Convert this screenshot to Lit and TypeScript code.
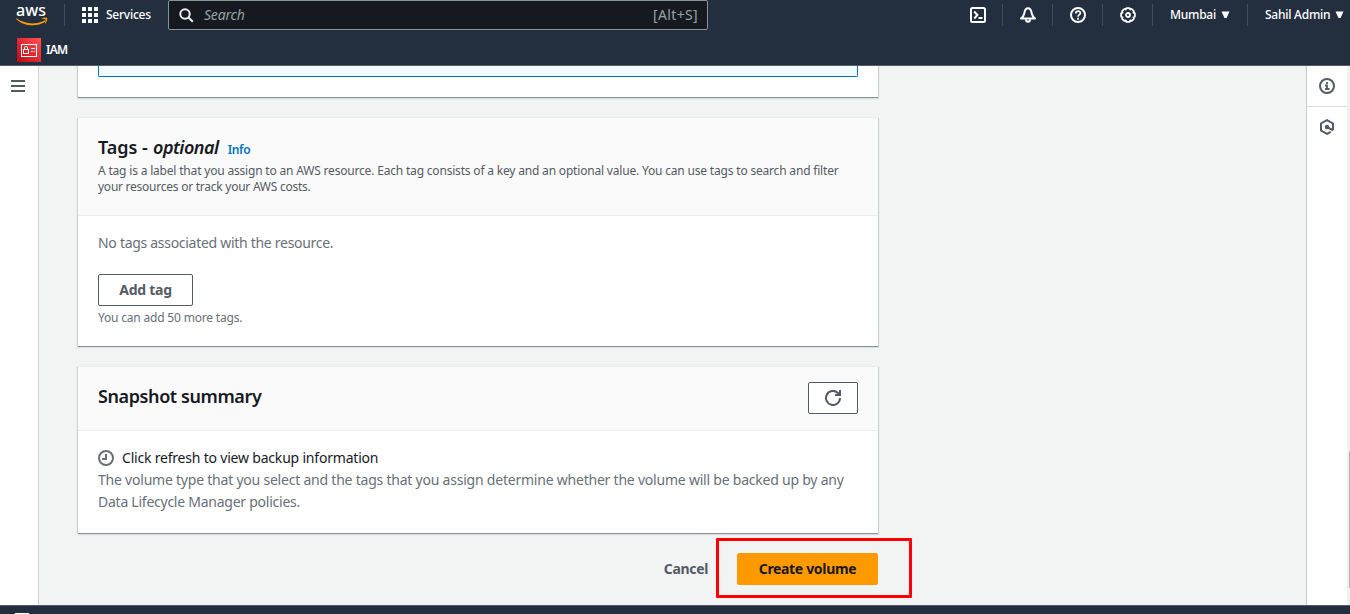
import { LitElement, html, css, svg } from "lit";
import { customElement } from "lit/decorators.js";

const caret = html`<svg class="caret" width="9" height="8" viewBox="0 0 9 8"><path d="M.5.5h8L5.500 7h-2z" fill="#fff"/></svg>`;

@customElement("console-header")
class ConsoleHeader extends LitElement {
  static styles = css`
    :host { display: flex; flex-direction: column; height: 65px; background: #232f3e; border-bottom: 1px solid #545b64; color: #fff; font-size: 12px; }
    svg { display: block; flex: none; }
    .top { display: flex; height: 30px; align-items: center; flex: none; }
    .logo { margin-left: 16px; width: 32px; overflow: visible; }
    .sep { width: 1px; height: 22px; background: #414d5c; flex: none; }
    .logo + .sep { margin-left: 16px; margin-right: 17px; }
    .services { display: flex; align-items: center; gap: 8px; width: 86px; white-space: nowrap; font-weight: 500; }
    .services span { letter-spacing: -0.25px; }
    .search { box-sizing: border-box; width: 540px; height: 30px; border: 1px solid #879596; border-radius: 2px; background: #16191f; display: flex; align-items: center; padding: 0 9px 0 10px; color: #95a5a6; font-size: 14px; }
    .search em { margin-left: 10px; flex: 1; color: #95a5a6; letter-spacing: -0.2px; }
    .alt { letter-spacing: 0.35px; }
    .tools { margin-left: auto; display: flex; align-items: center; height: 30px; }
    .tool { display: flex; justify-content: center; width: 49px; }
    .menu { display: flex; align-items: center; white-space: nowrap; font-weight: 500; }
    .region { width: 77px; padding-left: 17px; justify-content: flex-start; gap: 5px; }
    .user { width: 85px; padding-left: 17px; gap: 5px; }
    .region span { letter-spacing: -0.25px; }
    .user span { letter-spacing: -0.25px; }
    .fav { display: flex; align-items: center; height: 24px; margin: 8px 0 0 17px; gap: 5px; font-weight: 600; letter-spacing: -0.8px; }
  `;
  render() {
    return html`
      <div class="top">
        <svg class="logo" width="32" height="24" viewBox="0 0 32 24">
          <text x="0" y="12.500" font-family="Noto Sans, sans-serif" font-size="17" font-weight="500" fill="#fff" textLength="30" lengthAdjust="spacingAndGlyphs">aws</text>
          <path d="M.3 15.3c8.500 5.900 19 6.800 28.300 2.300.9-.4 1.500.5.700 1.100C20.500 24.300 7.500 23.300.1 15.900c-.3-.4-.1-.8.200-.6z" fill="#f90"/>
          <path d="M25.900 15.400c1.700-1.100 4.600-1 5.200-.4.500.7-.1 4-1.700 5.500-.4.300-.6.100-.5-.2.500-1.200 1.100-3 .8-3.700-.4-.6-2.400-.6-3.500-.6-.5-.1-.6-.4-.3-.6z" fill="#f90"/>
        </svg>
        <div class="sep"></div>
        <div class="services">
          <svg width="16" height="16" viewBox="0 0 16 16" fill="#fff">
            ${[0, 6, 12].map((y) => [0, 6, 12].map((x) => svg`<rect x=${x} y=${y} width="4" height="4" rx=".5"/>`))}
          </svg>
          <span>Services</span>
        </div>
        <div class="search">
          <svg width="15" height="15" viewBox="0 0 15 15" fill="none" stroke="#eaeded" stroke-width="2"><circle cx="6" cy="6" r="4.700"/><path d="M9.300 9.300l4.500 4.500"/></svg>
          <em>Search</em><span class="alt">[Alt+S]</span>
        </div>
        <div class="tools">
          <div class="tool"><svg width="16" height="16" viewBox="0 0 16 16" fill="none" stroke="#fff" stroke-width="2"><rect x="1" y="1" width="14" height="14" rx="1.500"/><path d="M4.200 4.500L7.400 8l-3.200 3.500M8.500 11h4"/></svg></div>
          <div class="sep"></div>
          <div class="tool"><svg width="16" height="16" viewBox="0 0 16 16" fill="none" stroke="#fff" stroke-width="2" stroke-linejoin="round"><path d="M1 11.500C3 10 3.900 8.300 4.300 6.200 4.800 3 6 1.300 8 1.300s3.200 1.700 3.700 4.900c.4 2.100 1.300 3.800 3.300 5.300z"/><path d="M6 12.300c0 3.400 4 3.400 4 0"/></svg></div>
          <div class="sep"></div>
          <div class="tool"><svg width="16" height="16" viewBox="0 0 16 16" fill="none" stroke="#fff" stroke-width="2"><circle cx="8" cy="8" r="7"/><path d="M5.700 6.500C5.700 3.300 10.500 3.500 10.400 6.300 10.300 7.900 8 7.700 8 9.700M8 10.700v2" stroke-width="1.700"/></svg></div>
          <div class="sep"></div>
          <div class="tool"><svg width="16" height="16" viewBox="0 0 16 16" fill="none" stroke="#fff" stroke-width="1.800" stroke-linejoin="round"><path d="M6.400 1.100h3.200l.6 1.400 1.600-.5 2.100 2.200-.5 1.500 1.500.7v3.200l-1.500.7.5 1.500-2.100 2.100-1.600-.5-.6 1.500H6.400l-.6-1.500-1.600.5-2.100-2.100.5-1.500-1.500-.7V6.400l1.500-.7-.5-1.500L4.200 2l1.600.5z"/><circle cx="8" cy="8" r="2"/></svg></div>
          <div class="sep"></div>
          <div class="menu region"><span>Mumbai</span>${caret}</div>
          <div class="sep"></div>
          <div class="menu user"><span>Sahil Admin</span>${caret}</div>
        </div>
      </div>
      <div class="fav">
        <svg width="24" height="24" viewBox="0 0 24 24">
          <defs><linearGradient id="g" x1="0" y1="1" x2="1" y2="0"><stop offset="0" stop-color="#bd0816"/><stop offset="1" stop-color="#ff5252"/></linearGradient></defs>
          <rect width="24" height="24" fill="url(#g)"/>
          <g fill="none" stroke="#fff"><rect x="4.500" y="6.500" width="15" height="12"/><rect x="6.500" y="11.500" width="5" height="4"/><path d="M7.500 11V9.500q0-1 1.500-1t1.500 1V11M14 10.500h4M14 13.500h2M17 13.500h1"/></g>
        </svg>
        <span>IAM</span>
      </div>`;
  }
}

@customElement("app-root")
class AppRoot extends LitElement {
  static styles = css`
    :host { display: flex; flex-direction: column; height: 614px; overflow: hidden; font-family: "Noto Sans", "Open Sans", sans-serif; font-size: 14px; line-height: 22px; color: #16191f; background: #f2f3f3; }
    svg { display: block; flex: none; }
    console-header { flex: none; }
    .main { height: 539px; flex: none; display: flex; overflow: hidden; }
    .left { box-sizing: border-box; width: 39px; background: #fff; border-right: 1px solid #d0d4d4; padding: 14px 0 0 11px; }
    .content { flex: 1; padding-left: 39px; display: flex; flex-direction: column; }
    .right { width: 40px; background: #fff; border-left: 1px solid #c3cccc; }
    .cell { height: 40px; display: flex; align-items: center; justify-content: center; }
    .cell:first-child { border-bottom: 1px solid #d5dbdb; }
    .track { width: 3px; background: #f1f1f1; display: flex; justify-content: flex-end; }
    .thumb { width: 1px; height: 137px; background: #b5b5b5; margin-top: 385px; }
    .card { width: 800px; background: #fff; box-shadow: 0 1px 0 0 #879596, 1px 0 0 0 #c9d0d0, -1px 0 0 0 #c9d0d0, 0 -1px 0 0 #eaeded, 0 1px 1px 1px rgba(0,28,36,.1); margin: 0 0 21px 0; flex: none; }
    .prev { box-sizing: border-box; height: 31px; padding: 0 20px; }
    .selected { box-sizing: border-box; height: 11px; border: 1px solid #0073bb; border-top: 0; background: #f1faff; border-radius: 0 0 2px 2px; }
    .tags { height: 228px; }
    .head { background: #fafafa; border-bottom: 1px solid #eaeded; padding: 19px 20px 20px; }
    .title { font-size: 18px; line-height: 22px; font-weight: 600; white-space: nowrap; margin: 0; }
    .t1 { display: flex; height: 22px; align-items: baseline; margin-top: -1px; margin-bottom: 5px; }
    .t1 em { letter-spacing: -0.5px; }
    .t1 .tt { width: 55px; letter-spacing: -0.05px; white-space: pre; }
    .t2 { letter-spacing: -0.4px; }
    .info { font-size: 12px; font-weight: 600; color: #0073bb; margin-left: 9px; letter-spacing: -0.3px; }
    .desc { font-size: 12px; line-height: 16px; margin-top: 4px; color: #545b64; white-space: nowrap; letter-spacing: -0.185px; }
    .d2 { letter-spacing: -0.25px; }
    .body { padding: 16px 20px 20px; white-space: nowrap; color: #687078; letter-spacing: -0.22px; }
    .b1 { letter-spacing: -0.29px; }
    .btn { box-sizing: border-box; height: 32px; border: 1px solid #545b64; border-radius: 2px; background: #fff; color: #545b64; font: 700 14px/22px "Noto Sans", sans-serif; letter-spacing: -0.25px; display: flex; align-items: center; justify-content: center; padding: 0; white-space: nowrap; }
    .add { width: 95px; margin-top: 20px; }
    .hint { font-size: 12px; line-height: 16px; margin-top: 4px; color: #687078; letter-spacing: -0.19px; }
    .summary { height: 166px; margin-bottom: 20px; }
    .row { display: flex; justify-content: space-between; padding: 15px 20px 16px; }
    .row .title { margin-top: 3px; }
    .refresh { width: 50px; }
    .status { display: flex; align-items: center; gap: 8px; color: #16191f; letter-spacing: -0.2px; }
    .s3 { letter-spacing: -0.25px; }
    .actions { width: 800px; display: flex; justify-content: flex-end; align-items: center; gap: 29px; }
    .cancel { color: #545b64; font-weight: 700; letter-spacing: -0.35px; }
    .anchor { position: relative; }
    .create { width: 141px; background: #f90; border-color: #f90; color: #16191f; letter-spacing: -0.33px; }
    .mark { position: absolute; left: -21px; top: -15px; width: 190px; height: 54px; border: 3px solid #f00; border-radius: 1px; pointer-events: none; }
    .footer { flex: none; height: 8px; border-top: 1px solid #545b64; background: #232f3e; display: flex; align-items: flex-end; }
    .peek { width: 14px; height: 1px; background: #fff; margin-left: 15px; }
  `;
  render() {
    return html`
      <console-header></console-header>
      <div class="main">
        <div class="left"><svg width="14" height="12" viewBox="0 0 14 12" fill="#545b64"><path d="M0 0h14v2H0zM0 5h14v2H0zM0 10h14v2H0z"/></svg></div>
        <div class="content">
          <div class="card prev"><div class="selected"></div></div>
          <section class="card tags">
            <div class="head">
              <h2 class="title t1"><span class="tt">Tags - </span><em>optional</em><span class="info">Info</span></h2>
              <div class="desc"><span class="d1">A tag is a label that you assign to an AWS resource. Each tag consists of a key and an optional value. You can use tags to search and filter</span><br><span class="d2">your resources or track your AWS costs.</span></div>
            </div>
            <div class="body">
              <div><span class="b1">No tags associated with the resource.</span></div>
              <button class="btn add">Add tag</button>
              <div class="hint">You can add 50 more tags.</div>
            </div>
          </section>
          <section class="card summary">
            <div class="head row">
              <h2 class="title t2">Snapshot summary</h2>
              <button class="btn refresh"><svg width="16" height="16" viewBox="0 0 16 16" fill="none" stroke="#545b64" stroke-width="2"><path d="M15 8a7 7 0 1 1-2.300-5.200L15 5"/><path d="M15 0v5h-5"/></svg></button>
            </div>
            <div class="body">
              <div class="status"><svg width="16" height="16" viewBox="0 0 16 16" fill="none" stroke="#687078" stroke-width="2"><circle cx="8" cy="8" r="7"/><path d="M8 4v5H4"/></svg><span class="s1">Click refresh to view backup information</span></div>
              <div><span class="s2">The volume type that you select and the tags that you assign determine whether the volume will be backed up by any</span><br><span class="s3">Data Lifecycle Manager policies.</span></div>
            </div>
          </section>
          <div class="actions">
            <span class="cancel">Cancel</span>
            <div class="anchor"><button class="btn create">Create volume</button><div class="mark"></div></div>
          </div>
        </div>
        <div class="right">
          <div class="cell"><svg width="16" height="16" viewBox="0 0 16 16" fill="none" stroke="#545b64" stroke-width="2"><circle cx="8" cy="8" r="7"/><path d="M8 4v2M6 7.500h2V11M6 11h4.500" stroke-width="1.800"/></svg></div>
          <div class="cell"><svg width="16" height="16" viewBox="0 0 16 16" fill="none" stroke="#545b64" stroke-width="2"><path d="M14 11.300V4.500L8 1.100 2 4.500v7L8 14.900l3.800-2.100"/><circle cx="8" cy="8" r="1.200" fill="#545b64"/><path d="M8 8l6 3.300"/></svg></div>
        </div>
        <div class="track"><div class="thumb"></div></div>
      </div>
      <div class="footer"><div class="peek"></div></div>`;
  }
}
